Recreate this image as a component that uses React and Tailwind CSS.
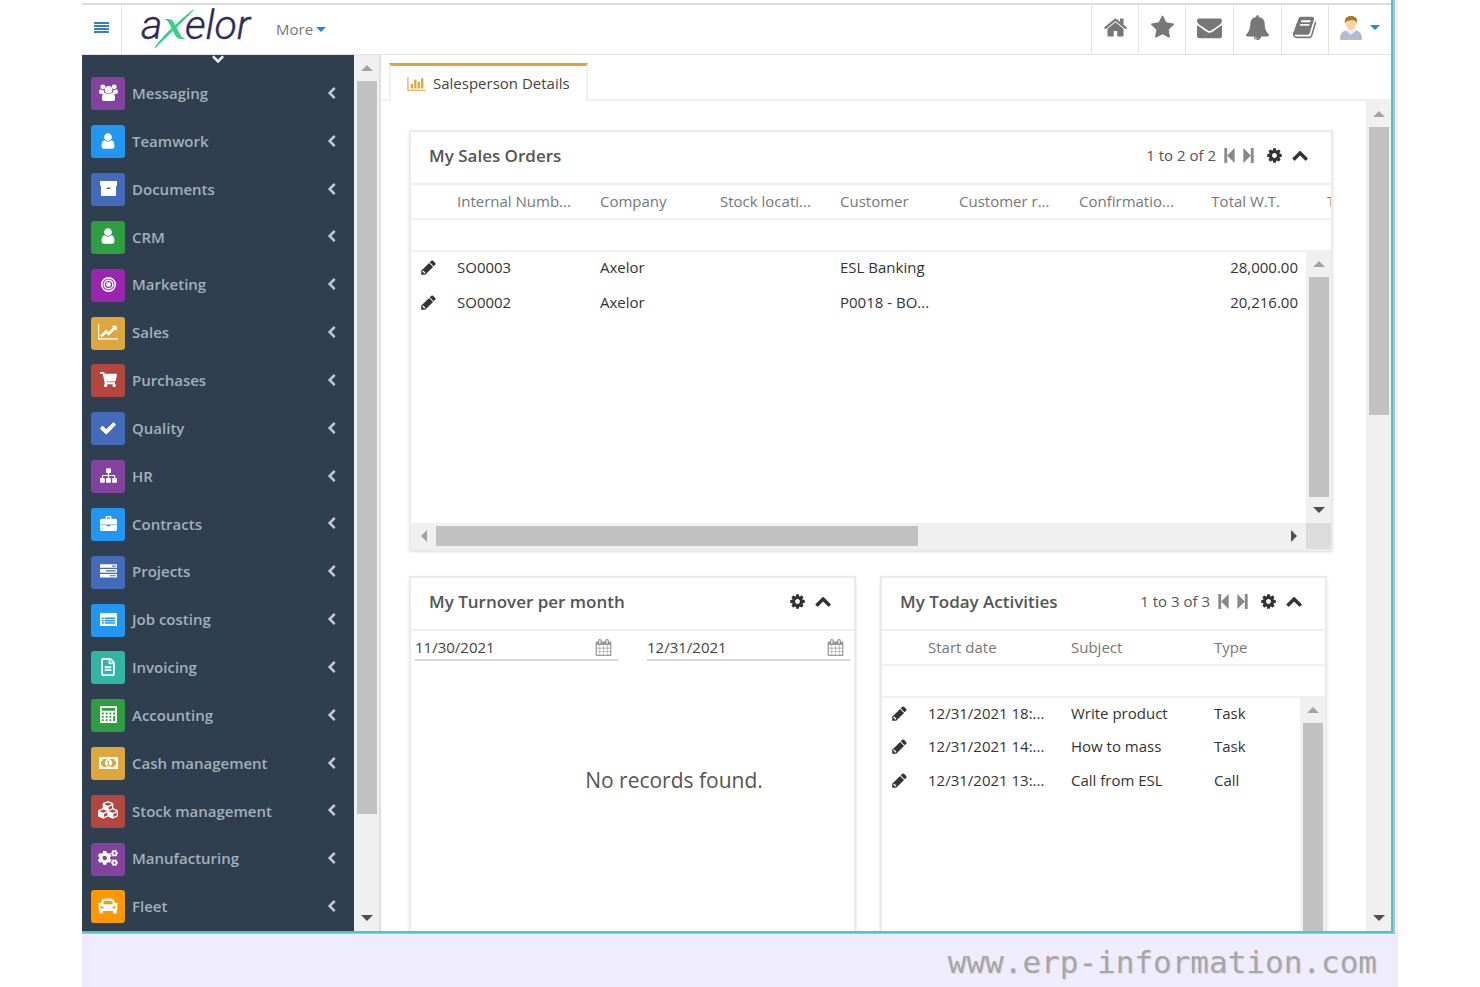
import { useState } from "react";
import { FaCar, FaCogs, FaCubes, FaRegFileAlt, FaShoppingCart } from "react-icons/fa";

// ─── Icons ───────────────────────────────────────────────────────────────────
const glyph = (d, viewBox = "0 0 1792 1792") =>
  function Glyph({ className }) {
    return (
      <svg viewBox={viewBox} fill="currentColor" className={className} aria-hidden="true">
        <path d={d} fillRule="evenodd" />
      </svg>
    );
  };

const HomeIcon = glyph(
  "M1472 992v480q0 26-19 45t-45 19h-384v-384h-256v384h-384q-26 0-45-19t-19-45v-480q0-1 .5-3t.5-3l575-474 575 474q1 2 1 6zm223-69l-62 74q-8 9-21 11h-3q-13 0-21-7l-692-577-692 577q-12 8-24 7-13-2-21-11l-62-74q-8-10-7-23.5t11-21.5l719-599q32-26 76-26t76 26l244 204v-195q0-14 9-23t23-9h192q14 0 23 9t9 23v408l219 182q10 8 11 21.5t-7 23.5z",
);
const StarIcon = glyph(
  "M1728 647q0 22-26 48l-363 354 86 500q1 7 1 20 0 21-10.5 35.5t-30.5 14.5q-19 0-40-12l-449-236-449 236q-22 12-40 12-21 0-31.5-14.5t-10.5-35.5q0-6 2-20l86-500-364-354q-25-27-25-48 0-37 56-46l502-73 225-455q19-41 49-41t49 41l225 455 502 73q56 9 56 46z",
);
const EnvelopeIcon = glyph(
  "M1792 710v794q0 66-47 113t-113 47h-1472q-66 0-113-47t-47-113v-794q44 49 101 87 362 246 497 345 57 42 92.5 65.5t94.5 48 110 24.5h2q51 0 110-24.5t94.5-48 92.5-65.5q170-123 498-345 57-39 100-87zm0-294q0 79-49 151t-122 123q-376 261-468 325-10 7-42.5 31t-54 38-52 32.5-57.5 27-50 9h-2q-23 0-50-9t-57.5-27-52-32.5-54-38-42.5-31q-91-64-262-182.5t-205-142.5q-62-42-117-115.5t-55-136.5q0-78 41.5-130t118.5-52h1472q65 0 112.5 47t47.5 113z",
);
const BellIcon = glyph(
  "M912 1696q0-16-16-16-59 0-101.5-42.5t-42.5-101.5q0-16-16-16t-16 16q0 73 51.5 124.5t124.5 51.5q16 0 16-16zm816-288q0 52-38 90t-90 38h-448q0 106-75 181t-181 75-181-75-75-181h-448q-52 0-90-38t-38-90q50-42 91-88t85-119.5 74.5-158.5 50-206 19.5-260q0-152 117-282.5t307-158.5q-8-19-8-39 0-40 28-68t68-28 68 28 28 68q0 20-8 39 190 28 307 158.5t117 282.5q0 139 19.5 260t50 206 74.5 158.5 85 119.5 91 88z",
);
const BookIcon = glyph(
  "M1639 478q40 57 18 129l-275 906q-19 64-76.5 107.5t-122.5 43.5h-923q-77 0-148.5-53.5t-99.5-131.5q-24-67-2-127 0-4 3-27t4-37q1-8-3-21.5t-3-19.5q2-11 8-21t16.5-23.5 16.5-23.5q23-38 45-91.5t30-91.5q3-10 .5-30t-.5-28q3-11 17-28t17-23q21-36 42-92t25-90q1-9-2.5-32t.5-28q4-13 22-30.5t22-22.5q19-26 42.5-84.5t27.5-96.5q1-8-3-25.5t-2-26.5q2-8 9-18t18-23 17-21q8-12 16.5-30.5t15-35 16-36 19.5-32 26.5-23.5 36-11.5 47.5 5.5l-1 3q38-9 51-9h761q74 0 114 56t18 130l-274 906q-36 119-71.5 153.5t-128.5 34.5h-869q-27 0-38 15-11 16-1 43 24 70 144 70h923q29 0 56-15.5t35-41.5l300-987q7-22 5-57 38 15 59 43zm-1064 2q-4 13 2 22.5t20 9.5h608q13 0 25.5-9.5t16.5-22.5l21-64q4-13-2-22.5t-20-9.5h-608q-13 0-25.5 9.5t-16.5 22.5zm-83 256q-4 13 2 22.5t20 9.5h608q13 0 25.5-9.5t16.5-22.5l21-64q4-13-2-22.5t-20-9.5h-608q-13 0-25.5 9.5t-16.5 22.5z",
);
const CogIcon = glyph(
  "M1152 896q0-106-75-181t-181-75-181 75-75 181 75 181 181 75 181-75 75-181zm512-109v222q0 12-8 23t-20 13l-185 28q-19 54-39 91 35 50 107 138 10 12 10 25t-9 23q-27 37-99 108t-94 71q-12 0-26-9l-138-108q-44 23-91 38-16 136-29 186-7 28-36 28h-222q-14 0-24.5-8.5t-11.5-21.5l-28-184q-49-16-90-37l-141 107q-10 9-25 9-14 0-25-11-126-114-165-168-7-10-7-23 0-12 8-23 15-21 51-66.5t54-70.5q-27-50-41-99l-183-27q-13-2-21-12.5t-8-23.5v-222q0-12 8-23t19-13l186-28q14-46 39-92-40-57-107-138-10-12-10-24 0-10 9-23 26-36 98.5-107.5t94.5-71.5q13 0 26 10l138 107q44-23 91-38 16-136 29-186 7-28 36-28h222q14 0 24.5 8.5t11.5 21.5l28 184q49 16 90 37l142-107q9-9 24-9 13 0 25 10 129 119 165 170 7 8 7 22 0 12-8 23-15 21-51 66.5t-54 70.5q26 50 41 98l183 28q13 2 21 12.5t8 23.5z",
);
const ChevronIcon = glyph(
  "M1427 301l-531 531 531 531q19 19 19 45t-19 45l-166 166q-19 19-45 19t-45-19l-742-742q-19-19-19-45t19-45l742-742q19-19 45-19t45 19l166 166q19 19 19 45t-19 45z",
);
const PencilIcon = glyph(
  "M491 1536l91-91-235-235-91 91v107h128v128h107zm469-1120l416 416-832 832h-416v-416zm683 96q0 53-37 90l-166 166-416-416 166-165q36-38 90-38 53 0 91 38l235 234q37 39 37 91z",
);
const UserIcon = glyph(
  "M1536 1399q0 109-62.5 187t-150.5 78h-854q-88 0-150.5-78t-62.5-187q0-85 8.5-160.5t31.5-152 58.5-131 94-89 134.5-34.5q131 128 313 128t313-128q76 0 134.5 34.5t94 89 58.5 131 31.5 152 8.5 160.5zm-256-887q0 159-112.5 271.5t-271.5 112.5-271.5-112.5-112.5-271.5 112.5-271.5 271.5-112.5 271.5 112.5 112.5 271.5z",
);
const LineChartIcon = glyph(
  "M2048 1536v128h-2048v-1536h128v1408h1920zm-128-1248v435q0 21-19.5 29.5t-35.5-7.5l-121-121-633 633q-10 10-23 10t-23-10l-233-233-416 416-192-192 585-585q10-10 23-10t23 10l233 233 464-464-121-121q-16-16-7.5-35.5t29.5-19.5h435q14 0 23 9t9 23z",
  "0 0 2048 1792",
);
const BarChartIcon = glyph(
  "M640 896v512h-256v-512h256zm384-512v1024h-256v-1024h256zm1024 1152v128h-2048v-1536h128v1408h1920zm-640-896v768h-256v-768h256zm384-384v1152h-256v-1152h256z",
  "0 0 2048 1792",
);
const CheckIcon = glyph(
  "M1671 566q0 40-28 68l-724 724-136 136q-28 28-68 28t-68-28l-136-136-362-362q-28-28-28-68t28-68l136-136q28-28 68-28t68 28l294 295 656-657q28-28 68-28t68 28l136 136q28 28 28 68z",
);
const TasksIcon = glyph(
  "M1024 1408h640v-128h-640v128zm-384-512h1024v-128h-1024v128zm640-512h384v-128h-384v128zm512 832v256q0 26-19 45t-45 19h-1664q-26 0-45-19t-19-45v-256q0-26 19-45t45-19h1664q26 0 45 19t19 45zm0-512v256q0 26-19 45t-45 19h-1664q-26 0-45-19t-19-45v-256q0-26 19-45t45-19h1664q26 0 45 19t19 45zm0-512v256q0 26-19 45t-45 19h-1664q-26 0-45-19t-19-45v-256q0-26 19-45t45-19h1664q26 0 45 19t19 45z",
);
const SitemapIcon = glyph(
  "M1792 1248v320q0 40-28 68t-68 28h-320q-40 0-68-28t-28-68v-320q0-40 28-68t68-28h96v-192h-512v192h96q40 0 68 28t28 68v320q0 40-28 68t-68 28h-320q-40 0-68-28t-28-68v-320q0-40 28-68t68-28h96v-192h-512v192h96q40 0 68 28t28 68v320q0 40-28 68t-68 28h-320q-40 0-68-28t-28-68v-320q0-40 28-68t68-28h96v-192q0-52 38-90t90-38h512v-192h-96q-40 0-68-28t-28-68v-320q0-40 28-68t68-28h320q40 0 68 28t28 68v320q0 40-28 68t-68 28h-96v192h512q52 0 90 38t38 90v192h96q40 0 68 28t28 68z",
);
const CalendarIcon = glyph(
  "M192 1664h288v-288h-288v288zm352 0h320v-288h-320v288zm-352-352h288v-320h-288v320zm352 0h320v-320h-320v320zm-352-384h288v-288h-288v288zm736 736h320v-288h-320v288zm-384-736h320v-288h-320v288zm768 736h288v-288h-288v288zm-384-352h320v-320h-320v320zm-352-864v-288q0-13-9.5-22.5t-22.5-9.5h-64q-13 0-22.5 9.5t-9.5 22.5v288q0 13 9.5 22.5t22.5 9.5h64q13 0 22.5-9.5t9.5-22.5zm736 864h288v-320h-288v320zm-384-384h320v-288h-320v288zm384 0h288v-288h-288v288zm32-480v-288q0-13-9.5-22.5t-22.5-9.5h-64q-13 0-22.5 9.5t-9.5 22.5v288q0 13 9.5 22.5t22.5 9.5h64q13 0 22.5-9.5t9.5-22.5zm384-64v1280q0 52-38 90t-90 38h-1408q-52 0-90-38t-38-90v-1280q0-52 38-90t90-38h128v-96q0-66 47-113t113-47h64q66 0 113 47t47 113v96h384v-96q0-66 47-113t113-47h64q66 0 113 47t47 113v96h128q52 0 90 38t38 90z",
);
const ArchiveIcon = glyph(
  "M0 1h18v5H0zM1 6H17V16q0 1-1 1H2q-1 0-1-1zM7 8v1.500h4V8z",
  "0 0 18 18",
);
const BriefcaseIcon = glyph(
  "M6 4V2q0-1 1-1h4q1 0 1 1v2h4q2 0 2 2v4H0V6q0-2 2-2zM7.500 2.500V4h3V2.500zM0 10.500h7v1.500h4v-1.500h7v4.500q0 2-2 2H2q-2 0-2-2z",
  "0 0 18 18",
);
const BullseyeIcon = glyph(
  "M9 1a8 8 0 1 0 0 16A8 8 0 1 0 9 1zM9 2.600a6.400 6.400 0 1 1 0 12.800A6.400 6.400 0 1 1 9 2.600zM9 3.600a5.400 5.400 0 1 0 0 10.800A5.400 5.400 0 1 0 9 3.600zM9 5.200a3.800 3.800 0 1 1 0 7.600A3.800 3.800 0 1 1 9 5.200zM9 6.400a2.600 2.600 0 1 0 0 5.200A2.600 2.600 0 1 0 9 6.400z",
  "0 0 18 18",
);
const CalculatorIcon = glyph(
  "M1 0h16q1 0 1 1v16q0 1-1 1H1q-1 0-1-1V1q0-1 1-1zM2 2v3h14V2zM2 7v2h2V7zM6 7v2h2V7zM10 7v2h2V7zM14 7v2h2V7zM2 10.500v2h2v-2zM6 10.500v2h2v-2zM10 10.500v2h2v-2zM2 14v2h2v-2zM6 14v2h2v-2zM10 14v2h2v-2zM14 10.500V16h2v-5.500z",
  "0 0 18 18",
);
const ListIcon = glyph(
  "M1 2h16q1 0 1 1v12q0 1-1 1H1q-1 0-1-1V3q0-1 1-1zM2 7v1.500h2V7zM5 7v1.500h11V7zM2 9.500V11h2V9.500zM5 9.500V11h11V9.500zM2 12v1.500h2V12zM5 12v1.500h11V12z",
  "0 0 18 18",
);
const MoneyIcon = glyph(
  "M0 3h19v12H0zM4 5a2 2 0 0 1-2 2v4a2 2 0 0 1 2 2h11a2 2 0 0 1 2-2V7a2 2 0 0 1-2-2zM9.500 5C11.500 5 13 6.800 13 9s-1.500 4-3.500 4S6 11.200 6 9s1.500-4 3.500-4zM9 6.500L8 7.500v.8h1V11H8v1h3v-1h-1V6.500z",
  "0 0 19 18",
);
const FirstIcon = glyph("M0 0h3v16H0zM3 8l8-8v16z", "0 0 11 16");
const LastIcon = glyph("M0 0l8 8-8 8zM8 0h3v16H8z", "0 0 11 16");

function GroupIcon({ className }) {
  return (
    <svg viewBox="0 0 20 18" fill="currentColor" className={className} aria-hidden="true">
      <circle cx="4" cy="3" r="2.600" />
      <circle cx="16" cy="3" r="2.600" />
      <circle cx="10" cy="6" r="4" />
      <path d="M5 6.500C5 9 6 10 7 10.500H2.500C1 10.500 0 10 0 8.500 0 7 .5 5.500 1.500 5.500c2 1.200 2.500 1 3.500 1zM15 6.500c0 2.500-1 3.500-2 4h4.500c1.500 0 2.500-.5 2.500-2 0-1.500-.5-3-1.500-3-2 1.200-2.500 1-3.500 1z" />
      <path d="M6.500 9.500c2 1.500 5 1.500 7 0 2.500 0 3.500 2.500 3.500 5.500 0 2-1 3-2.500 3h-9C4 18 3 17 3 15c0-3 1-5.500 3.500-5.500z" />
    </svg>
  );
}

function Logo() {
  return (
    <svg viewBox="0 0 116 56" className="h-14 w-[116px]" role="img" aria-label="axelor">
      <g
        fill="#2e2a5c"
        stroke="#2e2a5c"
        strokeWidth="0.4"
        fontFamily="Roboto, sans-serif"
        fontStyle="italic"
        fontWeight="300"
        fontSize="41"
      >
        <text x="1" y="37">a</text>
        <text x="45" y="37">elor</text>
      </g>
      <path d="M24 17h4c3 0 5 1 6 4l5 9c2 4 3 6 7 7h-5c-3 0-5-2-6-4l-5-10c-2-4-3-5-6-6z" fill="#35d08a" />
      <path d="M53 8C42 17 22 34 15 46C24 36 42 21 53 8z" fill="#35d08a" stroke="#35d08a" strokeWidth="1" />
    </svg>
  );
}

function Avatar() {
  return (
    <svg viewBox="0 0 22 26" className="h-[26px] w-[22px]" aria-hidden="true">
      <path d="M0 24c0-6 3-8 7-9h8c4 1 7 3 7 9 0 1-1 1-2 1H2c-1 0-2 0-2-1z" fill="#b4b9d4" />
      <path d="M6 16l5 4 5-4-2-2H8z" fill="#e9ebf5" />
      <ellipse cx="11" cy="9" rx="5" ry="6" fill="#fbd3a0" />
      <path d="M5 9C4 3 7 1 11 1s7 2 6 8c-1-3-2-4-5-4-3 1-6 0-7 4z" fill="#a8781f" />
    </svg>
  );
}

// ─── Data ────────────────────────────────────────────────────────────────────
const MENU = [
  { label: "Messaging", icon: GroupIcon, color: "bg-[#84429f]", size: "h-[17px] w-[19px]" },
  { label: "Teamwork", icon: UserIcon, color: "bg-[#2196f3]" },
  { label: "Documents", icon: ArchiveIcon, color: "bg-[#426bb9]", size: "size-[17px]" },
  { label: "CRM", icon: UserIcon, color: "bg-[#2f9e41]" },
  { label: "Marketing", icon: BullseyeIcon, color: "bg-[#9b25af]", size: "size-[17px]" },
  { label: "Sales", icon: LineChartIcon, color: "bg-[#dfa63b]", size: "h-[18px] w-5" },
  { label: "Purchases", icon: FaShoppingCart, color: "bg-[#b5463e]", size: "size-[17px]" },
  { label: "Quality", icon: CheckIcon, color: "bg-[#426bb9]" },
  { label: "HR", icon: SitemapIcon, color: "bg-[#84429f]", size: "size-[17px]" },
  { label: "Contracts", icon: BriefcaseIcon, color: "bg-[#2196f3]", size: "size-[17px]" },
  { label: "Projects", icon: TasksIcon, color: "bg-[#426bb9]", size: "size-[17px]" },
  { label: "Job costing", icon: ListIcon, color: "bg-[#2196f3]", size: "size-[17px]" },
  { label: "Invoicing", icon: FaRegFileAlt, color: "bg-[#32b5a5]" },
  { label: "Accounting", icon: CalculatorIcon, color: "bg-[#2f9e41]", size: "size-[17px]" },
  { label: "Cash management", icon: MoneyIcon, color: "bg-[#dfa63b]", size: "h-[18px] w-[19px]" },
  { label: "Stock management", icon: FaCubes, color: "bg-[#b5463e]", size: "size-5" },
  { label: "Manufacturing", icon: FaCogs, color: "bg-[#84429f]", size: "size-5" },
  { label: "Fleet", icon: FaCar, color: "bg-[#ff9800]", size: "size-5" },
];

const SHORTCUTS = [
  { label: "Home", icon: HomeIcon, width: "w-[47px]" },
  { label: "Favorites", icon: StarIcon, width: "w-[47px]" },
  { label: "Messages", icon: EnvelopeIcon, width: "w-12" },
  { label: "Notifications", icon: BellIcon, width: "w-12" },
  { label: "Documentation", icon: BookIcon, width: "w-[47px]" },
];

const ORDERS = [
  ["SO0003", "Axelor", "", "ESL Banking", "", "", "28,000.00"],
  ["SO0002", "Axelor", "", "P0018 - BO...", "", "", "20,216.00"],
];

const ACTIVITIES = [
  ["12/31/2021 18:...", "Write product", "Task"],
  ["12/31/2021 14:...", "How to mass", "Task"],
  ["12/31/2021 13:...", "Call from ESL", "Call"],
];

// ─── Scrollbars ──────────────────────────────────────────────────────────────
function Scrollbar({ thumb, down = true, className = "" }) {
  return (
    <div className={`flex flex-col items-center bg-[#f0f0f0] ${className}`} aria-hidden="true">
      <div className="flex h-[26px] shrink-0 items-center">
        <div className="border-x-[6px] border-b-[6px] border-x-transparent border-b-[#a3a3a3]" />
      </div>
      <div className="min-h-0 w-5 flex-1">
        <div className={`w-full bg-[#c1c1c1] ${thumb}`} />
      </div>
      {down && (
        <div className="flex h-[26px] shrink-0 items-center">
          <div className="border-x-[6px] border-t-[6px] border-x-transparent border-t-[#505050]" />
        </div>
      )}
    </div>
  );
}

// ─── Header ──────────────────────────────────────────────────────────────────
function Header({ onToggle }) {
  return (
    <header className="flex h-[52px] shrink-0 items-center border-t-2 border-b border-t-[#dcdcdc] border-b-[#e4e4e4] bg-white">
      <button
        onClick={onToggle}
        aria-label="Toggle menu"
        className="flex h-full w-10 flex-col items-center justify-center gap-px border-r border-[#e4e4e4] pb-1"
      >
        <span className="h-[2px] w-[15px] bg-[#2f7fd0]" />
        <span className="h-[2px] w-[15px] bg-[#2f7fd0]" />
        <span className="h-[2px] w-[15px] bg-[#2f7fd0]" />
        <span className="h-[2px] w-[15px] bg-[#2f7fd0]" />
      </button>
      <a href="#home" className="ml-[18px]">
        <Logo />
      </a>
      <button className="ml-5 flex items-center gap-[3px] text-[15px] text-[#777]">
        More
        <span className="border-x-[5px] border-t-[5px] border-x-transparent border-t-[#1e88e5]" />
      </button>
      <nav className="ml-auto flex h-full items-center">
        {SHORTCUTS.map(({ label, icon: Icon, width }) => (
          <button
            key={label}
            aria-label={label}
            className={`flex h-full items-center justify-center border-l border-[#e4e4e4] pb-1 text-[#777] ${width}`}
          >
            <Icon className="size-[25px]" />
          </button>
        ))}
        <button
          aria-label="Account"
          className="flex h-full w-[63px] items-center justify-center gap-2 border-l border-[#e4e4e4] pb-1"
        >
          <Avatar />
          <span className="border-x-[5px] border-t-[5px] border-x-transparent border-t-[#1e88e5]" />
        </button>
      </nav>
    </header>
  );
}

// ─── Sidebar ─────────────────────────────────────────────────────────────────
function Sidebar() {
  return (
    <aside className="flex shrink-0 border-r-2 border-[#e0e0e0]">
      <div className="flex w-[272px] flex-col bg-[#2f3f4f]">
        <div className="flex h-[15px] shrink-0 items-start justify-center overflow-hidden">
          <ChevronIcon className="-mt-[2px] size-[13px] -rotate-90 text-[#e8edf2]" />
        </div>
        <ul className="flex min-h-0 flex-1 flex-col">
          {MENU.map(({ label, icon: Icon, color, size }) => (
            <li key={label} className="min-h-0 flex-1">
              <a href={`#${label}`} className="flex h-full items-center pr-4 pl-[9px]">
                <span
                  className={`flex h-[33px] w-[34px] items-center justify-center rounded-[3px] text-white ${color}`}
                >
                  <Icon className={`mb-[2px] ${size ?? "size-[18px]"}`} />
                </span>
                <span className="mb-px ml-[7px] flex-1 text-[15px] font-semibold text-[#a3b0be]">{label}</span>
                <ChevronIcon className="mb-px size-[13px] text-[#c0c9d2]" />
              </a>
            </li>
          ))}
        </ul>
      </div>
      <Scrollbar className="w-[25px]" thumb="h-[89%]" />
    </aside>
  );
}

// ─── Cards ───────────────────────────────────────────────────────────────────
function Card({ title, pager, className = "", children }) {
  return (
    <section
      className={`flex flex-col overflow-hidden border-2 border-[#ebebeb] bg-white shadow-sm ${className}`}
    >
      <div className="flex h-[53px] shrink-0 items-center border-b-2 border-[#eee] pr-[23px] pb-1 pl-[18px]">
        <h2 className="flex-1 text-[17px] font-semibold text-[#555]">{title}</h2>
        {pager && (
          <div className="mr-3 flex items-center gap-2 text-[#888]">
            <span className="text-[15px] text-[#555]">{pager}</span>
            <button aria-label="Previous page">
              <FirstIcon className="h-[15px] w-[11px]" />
            </button>
            <button aria-label="Next page">
              <LastIcon className="h-[15px] w-[11px]" />
            </button>
          </div>
        )}
        <button aria-label="Settings" className="mr-2">
          <CogIcon className="size-[17px] text-[#333]" />
        </button>
        <button aria-label="Collapse">
          <ChevronIcon className="size-[17px] rotate-90 text-[#333]" />
        </button>
      </div>
      {children}
    </section>
  );
}

function DataTable({ columns, rows, rowHeight, tableWidth }) {
  return (
    <table
      className={`col-span-2 col-start-1 row-span-2 row-start-1 table-fixed self-start text-left text-[15px] whitespace-nowrap ${tableWidth}`}
    >
      <colgroup>
        <col className="w-[38px]" />
        {columns.map((c) => (
          <col key={c.label} className={c.width} />
        ))}
      </colgroup>
      <thead className="text-[#777]">
        <tr className="h-[34px] border-b-2 border-[#f0f0f0]">
          <td />
          {columns.map((c) => (
            <th key={c.label} scope="col" className={`py-0 font-normal ${c.head ?? "pl-2"}`}>
              {c.label}
            </th>
          ))}
        </tr>
        <tr className="h-8 border-b-2 border-[#f0f0f0]">
          <td colSpan={columns.length + 1} />
        </tr>
      </thead>
      <tbody className="text-[#333]">
        {rows.map((row) => (
          <tr key={row[0]} className={rowHeight}>
            <td className="p-0 pb-[3px]">
              <button aria-label={`Edit ${row[0]}`} className="flex w-[34px] justify-center">
                <PencilIcon className="size-[17px]" />
              </button>
            </td>
            {row.map((cell, i) => (
              <td key={columns[i].label} className={`pt-0 pb-[3px] ${columns[i].cell ?? "pl-2"}`}>
                {cell}
              </td>
            ))}
          </tr>
        ))}
      </tbody>
    </table>
  );
}

function SalesOrders() {
  const columns = [
    { label: "Internal Numb...", width: "w-[143px]" },
    { label: "Company", width: "w-[120px]" },
    { label: "Stock locati...", width: "w-[120px]" },
    { label: "Customer", width: "w-[119px]" },
    { label: "Customer r...", width: "w-[120px]" },
    { label: "Confirmatio...", width: "w-[119px]" },
    { label: "Total W.T.", width: "w-[120px]", head: "pr-[30px] text-right", cell: "pr-3 text-right" },
    { label: "T", width: "w-[119px]", head: "pl-[17px]" },
  ];
  return (
    <Card title="My Sales Orders" pager="1 to 2 of 2" className="mr-[33px] ml-7">
      <div className="grid h-[338px] grid-cols-[minmax(0,1fr)_25px] grid-rows-[66px_minmax(0,1fr)] overflow-hidden">
        <DataTable columns={columns} rows={ORDERS} rowHeight="h-[35px]" tableWidth="w-[1018px]" />
        <Scrollbar className="col-start-2 row-start-2" thumb="h-full" />
      </div>
      <div className="flex h-[26px] bg-[#f0f0f0]" aria-hidden="true">
        <div className="flex w-[25px] items-center justify-center">
          <div className="border-y-[6px] border-r-[6px] border-y-transparent border-r-[#a3a3a3]" />
        </div>
        <div className="flex flex-1 items-center">
          <div className="h-5 w-[57%] bg-[#c1c1c1]" />
        </div>
        <div className="flex w-[25px] items-center justify-center">
          <div className="border-y-[6px] border-l-[6px] border-y-transparent border-l-[#505050]" />
        </div>
        <div className="w-[25px] bg-[#dcdcdc]" />
      </div>
    </Card>
  );
}

function DateField({ label, value, onChange }) {
  return (
    <label className="flex min-w-0 flex-1 items-center border-b-2 border-[#d8d8d8]">
      <input
        aria-label={label}
        value={value}
        onChange={(e) => onChange(e.target.value)}
        className="h-7 w-full min-w-0 flex-1 pt-1 text-[15px] text-[#444] outline-none"
      />
      <CalendarIcon className="mt-1 mr-[6px] size-[17px] text-[#999]" />
    </label>
  );
}

function Turnover() {
  const [from, setFrom] = useState("11/30/2021");
  const [to, setTo] = useState("12/31/2021");

  return (
    <Card title="My Turnover per month" className="flex-1">
      <div className="flex gap-[29px] px-1">
        <DateField label="From date" value={from} onChange={setFrom} />
        <DateField label="To date" value={to} onChange={setTo} />
      </div>
      <p className="mt-[104px] pl-[83px] text-center text-[21px] leading-[30px] text-[#555]">
        No records found.
      </p>
    </Card>
  );
}

function Activities() {
  const columns = [
    { label: "Start date", width: "w-[143px]" },
    { label: "Subject", width: "w-[143px]" },
    { label: "Type", width: "w-auto" },
  ];
  return (
    <Card title="My Today Activities" pager="1 to 3 of 3" className="flex-1">
      <div className="grid min-h-0 flex-1 grid-cols-[minmax(0,1fr)_25px] grid-rows-[66px_minmax(0,1fr)]">
        <DataTable columns={columns} rows={ACTIVITIES} rowHeight="h-[34px]" tableWidth="w-full" />
        <Scrollbar className="col-start-2 row-start-2" thumb="h-full" down={false} />
      </div>
    </Card>
  );
}

// ─── Page ────────────────────────────────────────────────────────────────────
export default function App() {
  const [menuOpen, setMenuOpen] = useState(true);

  return (
    <div className="h-screen bg-white px-[82px] font-['Open_Sans',sans-serif]">
      <div className="flex h-full flex-col bg-[#efedfd]">
        <div className="mr-[3px] flex min-h-0 flex-1 flex-col border-r-2 border-b border-[#b9bcc4]">
          <div className="flex min-h-0 flex-1 flex-col border-r-2 border-b-2 border-[#4fc3cb] bg-white pt-[3px]">
            <Header onToggle={() => setMenuOpen(!menuOpen)} />
            <div className="flex min-h-0 flex-1">
              {menuOpen && <Sidebar />}
              <main className="flex min-w-0 flex-1 flex-col">
                <div className="flex h-[46px] shrink-0 items-end" role="tablist">
                  <span className="w-2 self-end border-b-2 border-[#f0f0f0]" />
                  <button
                    role="tab"
                    aria-selected="true"
                    className="flex h-[38px] items-center gap-[7px] border-x-2 border-t-[3px] border-x-[#f0f0f0] border-t-[#e0a53a] px-4 text-[15px] text-[#444]"
                  >
                    <BarChartIcon className="h-4 w-[19px] text-[#e0a53a]" />
                    Salesperson Details
                  </button>
                  <span className="flex-1 border-b-2 border-[#f0f0f0]" />
                </div>
                <div className="flex min-h-0 flex-1">
                  <div className="flex min-w-0 flex-1 flex-col overflow-hidden pt-[29px]">
                    <SalesOrders />
                    <div className="mt-[25px] mr-[39px] -mb-1 ml-7 flex min-h-0 flex-1 gap-6">
                      <Turnover />
                      <Activities />
                    </div>
                  </div>
                  <Scrollbar className="w-[25px]" thumb="h-[37%]" />
                </div>
              </main>
            </div>
          </div>
        </div>
        <footer className="flex h-[53px] shrink-0 items-center justify-end pt-1 pr-[21px] font-['DejaVu_Sans_Mono',monospace] text-[31px] text-[#a6a6a6] [text-shadow:1px_1px_1px_#d8d8de]">
          www.erp-information.com
        </footer>
      </div>
    </div>
  );
}
